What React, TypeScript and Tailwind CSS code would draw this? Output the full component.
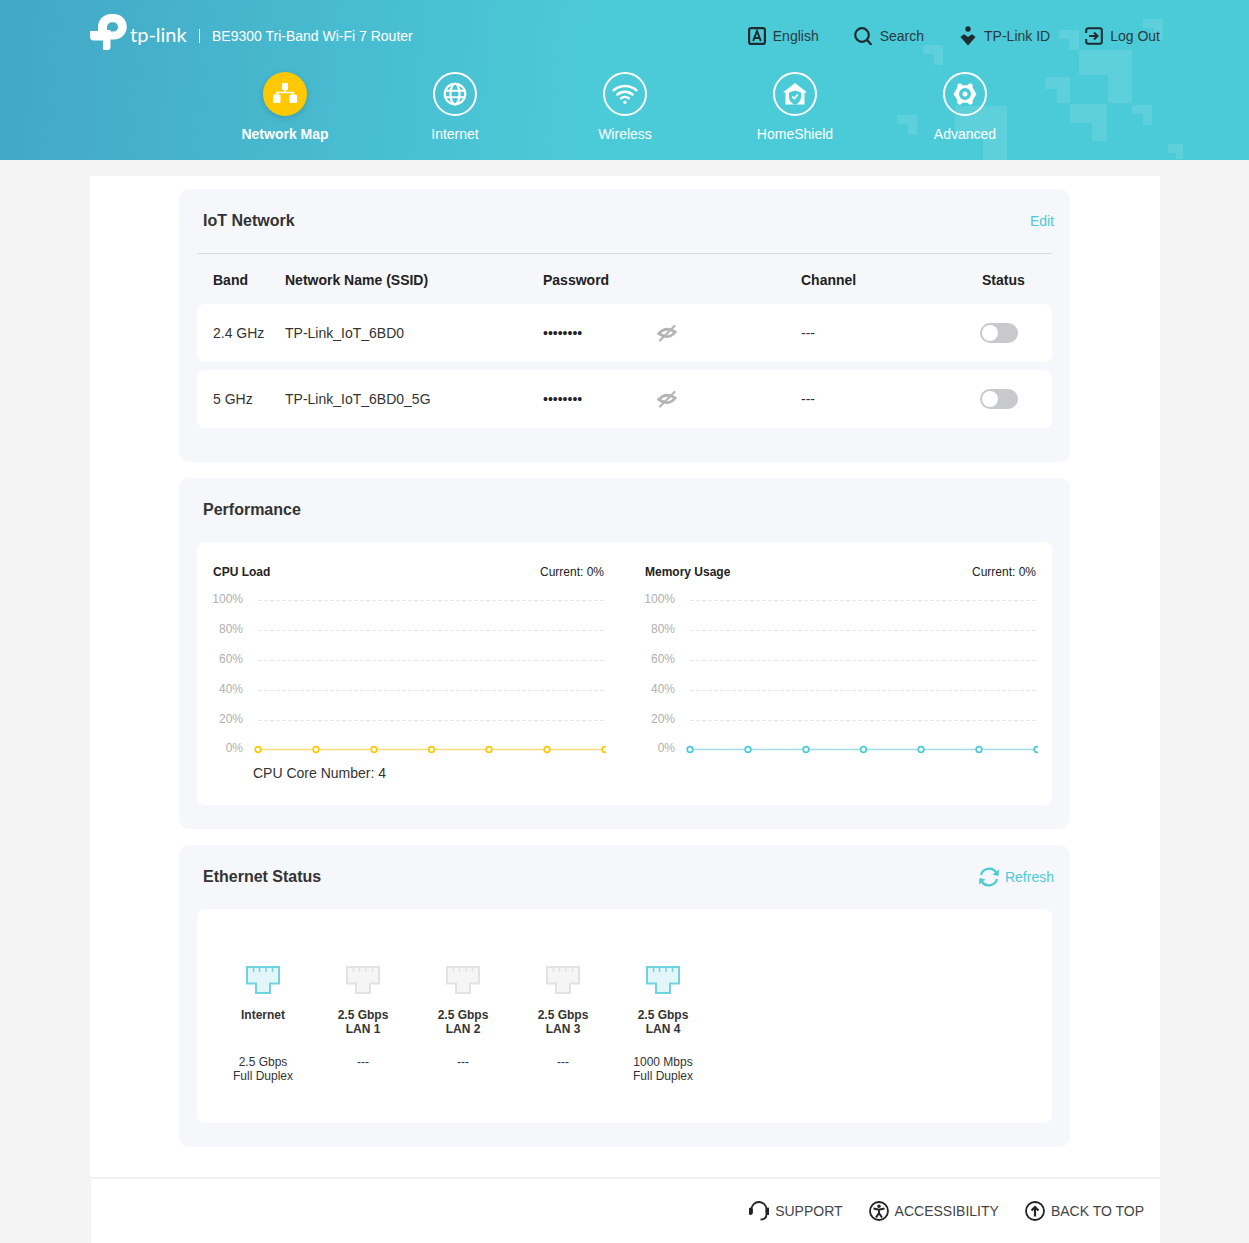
import React from 'react'

const FONT = "font-['Liberation_Sans',Arial,sans-serif]"

// faint stepped shapes in the header background: [left, top, width, height, notchWidth, notchHeight]
const BG_SHAPES = [
    [923, 45, 20, 20, 11, 11],
    [1059, 30, 20, 20, 10, 11],
    [1079, 50, 53, 53, 29, 28],
    [1143, 19, 20, 21, 11, 12],
    [1045, 77, 25, 26, 12, 14],
    [1070, 104, 37, 37, 22, 18],
    [1132, 105, 20, 20, 11, 11],
    [897, 115, 20, 20, 11, 11],
    [955, 106, 52, 54, 28, 21],
    [1168, 144, 15, 15, 8, 6],
]

const NavIcon = ({ name }: { name: string }) => {
    if (name === 'map') {
        return (
            <svg viewBox="0 0 24 24" className="w-6 h-6" fill="#fff">
                <rect x="9" y="1" width="6" height="7" rx="1" />
                <path d="M11.200 7h1.600v2.700h8V14h-1.600v-2.700H4.800V14H3.200V9.700h8z" />
                <rect x="0" y="12.500" width="7.500" height="8.500" rx="1.500" />
                <rect x="16.500" y="12.500" width="7.500" height="8.500" rx="1.500" />
            </svg>
        )
    }
    if (name === 'globe') {
        return (
            <svg viewBox="0 0 24 24" className="w-[26px] h-[26px]" fill="none" stroke="#fff" strokeWidth="2">
                <circle cx="12" cy="12" r="9.500" />
                <ellipse cx="12" cy="12" rx="4.200" ry="9.500" />
                <path d="M2.500 9h19M2.500 15h19" />
            </svg>
        )
    }
    if (name === 'wifi') {
        return (
            <svg viewBox="0 0 24 24" className="w-[26px] h-[26px]" fill="none" stroke="#fff" strokeWidth="2.300" strokeLinecap="round">
                <path d="M1.500 8.500c6-5.300 15-5.300 21 0" />
                <path d="M5 12.500c4-3.500 10-3.500 14 0" />
                <path d="M8.500 16c2-1.600 5-1.600 7 0" />
                <circle cx="12" cy="19.500" r="1.500" fill="#fff" stroke="none" />
            </svg>
        )
    }
    if (name === 'shield') {
        return (
            <svg viewBox="0 0 24 24" className="w-6 h-6">
                <path fill="#fff" d="M12 1 24 10.500h-2.500V22.500h-19V10.500H0z" />
                <path fill="#4bcbd7" d="M12 8.500l6 2v5c0 3-2.500 5.500-5 7h-2c-2.500-1.500-5-4-5-7v-5z" />
                <path fill="none" stroke="#fff" strokeWidth="1.700" d="m9.200 14.500 2 2 3.600-3.800" />
            </svg>
        )
    }
    return (
        <svg viewBox="0 0 24 24" className="w-6 h-6">
            <path fill="#fff" fillRule="evenodd" d="M5.500 1.500h2.200l1.800 1.700h5l1.800-1.700h2.200l1.200 1.500v2.700L23.500 12l-3.800 6.300V21l-1.200 1.500h-2.200l-1.800-1.700h-5l-1.800 1.700H5.500L4.300 21v-2.700L.5 12l3.800-6.300V3zM12 6a6 6 0 1 0 0 12 6 6 0 0 0 0-12z" />
            <circle cx="12" cy="12" r="2.500" fill="#fff" />
        </svg>
    )
}

const NAV = [
    { label: 'Network Map', icon: 'map', active: true },
    { label: 'Internet', icon: 'globe' },
    { label: 'Wireless', icon: 'wifi' },
    { label: 'HomeShield', icon: 'shield' },
    { label: 'Advanced', icon: 'gear' },
]

const Header = () => (
    <header className="relative h-40 overflow-hidden bg-[linear-gradient(95deg,#43a7c6,#4bcbd7_48%)]">
        {BG_SHAPES.map(([l, t, w, h, nw, nh], i) => (
            <div
                key={i}
                className="absolute bg-white/10"
                style={{
                    left: l,
                    top: t,
                    width: w,
                    height: h,
                    clipPath: `polygon(0 0, 100% 0, 100% 100%, ${nw}px 100%, ${nw}px ${h - nh}px, 0 ${h - nh}px)`,
                }}
            />
        ))}
        <div className="relative flex items-center h-[72px] pl-[90px] pr-[89px]">
            <svg viewBox="0 0 37 37" className="w-[37px] h-[37px] shrink-0 -mt-[7px]" fill="#fff">
                <path d="M0 17h13v9.500H3.500C1.500 26.500 0 25 0 23z" />
                <path d="M13 16h7.500v17.500c0 1.500-1.300 2.500-2.500 2.500h-5z" />
                <path d="M8 17v-4A13 13 0 0 1 21 0h3a12.700 12.700 0 0 1 0 25.500h-4V17.500h3.500a4.600 4.600 0 0 0 0-9.200H22a5 5 0 0 0-5 5V17z" />
            </svg>
            <span className="w-[72px] pl-[3px] text-xl leading-none text-white font-['Lato',sans-serif] -mt-[4px]">tp-link</span>
            <span className="w-px h-[14px] bg-white" />
            <span className="text-sm text-white ml-3">BE9300 Tri-Band Wi-Fi 7 Router</span>
            <div className="ml-auto flex items-center text-sm text-[#2a3a40]">
                <svg viewBox="0 0 18 18" className="w-[18px] h-[18px]" fill="none" stroke="#1f2a2e" strokeWidth="2.200">
                    <rect x="1.100" y="1.100" width="15.800" height="15.800" rx="2" />
                    <path strokeWidth="2" d="m5.200 14 3.800-10 3.800 10M6.500 11h5" />
                </svg>
                <span className="ml-[7px]">English</span>
                <svg viewBox="0 0 18 18" className="w-[18px] h-[18px] ml-[35px]" fill="none" stroke="#1f2a2e" strokeWidth="2.200">
                    <circle cx="8" cy="8" r="6.800" />
                    <path d="m13 13 4 4.500" strokeLinecap="round" />
                </svg>
                <span className="ml-[8px]">Search</span>
                <svg viewBox="0 0 16 20" className="w-4 h-5 ml-[36px]" fill="#1f2a2e">
                    <circle cx="8" cy="3" r="2.700" />
                    <path d="M0.500 11 4 8.200l4 2.800 4-2.800 3.500 2.800L8 19.500z" />
                </svg>
                <span className="ml-[8px]">TP-Link ID</span>
                <svg viewBox="0 0 18 18" className="w-[18px] h-[18px] ml-[35px]" fill="none" stroke="#1f2a2e" strokeWidth="2">
                    <path d="M1.200 6V3.200a2 2 0 0 1 2-2h11.600a2 2 0 0 1 2 2v11.600a2 2 0 0 1-2 2H3.200a2 2 0 0 1-2-2V12" />
                    <path d="M4 9h8.500M9 5.500 12.500 9 9 12.500" />
                </svg>
                <span className="ml-[7px]">Log Out</span>
            </div>
        </div>
        <nav className="relative flex pl-[200px]">
            {NAV.map((n) => (
                <div key={n.label} className="w-[170px] flex flex-col items-center">
                    {n.active ? (
                        <div className="w-11 h-11 rounded-full bg-[#ffc800] shadow-[0_2px_6px_rgba(0,0,0,0.15)] flex items-center justify-center">
                            <NavIcon name={n.icon} />
                        </div>
                    ) : (
                        <div className="w-11 h-11 rounded-full border-2 border-white flex items-center justify-center">
                            <NavIcon name={n.icon} />
                        </div>
                    )}
                    <span className={`mt-[10px] text-sm leading-4 text-white ${n.active ? 'font-bold' : ''}`}>{n.label}</span>
                </div>
            ))}
        </nav>
    </header>
)

const EyeOff = () => (
    <svg viewBox="0 0 20 20" className="w-5 h-5" fill="none" stroke="#b4b4b4">
        <path strokeWidth="2.800" d="M1.800 10.500C6 6 12 5 18.200 9 14 14.500 8 15 1.800 10.500z" />
        <path strokeWidth="2.200" strokeLinecap="round" d="M3 17.500 17.500 3" />
    </svg>
)

const Toggle = () => (
    <div className="w-[38px] h-5 rounded-full bg-[#c8c9cc] p-[2px]">
        <div className="w-4 h-4 rounded-full bg-white" />
    </div>
)

const Card = ({ title, right, children, className }: { title: string; right?: React.ReactNode; children: React.ReactNode; className?: string }) => (
    <section className={`bg-[#f5f7fb] rounded-[10px] px-[18px] ${className ?? ''}`}>
        <div className="flex items-center justify-between h-16 pl-[6px] -mr-[2px]">
            <h2 className="text-base font-bold text-[#333]">{title}</h2>
            {right}
        </div>
        {children}
    </section>
)

const ROWS = [
    { band: '2.4 GHz', ssid: 'TP-Link_IoT_6BD0' },
    { band: '5 GHz', ssid: 'TP-Link_IoT_6BD0_5G' },
]

const IotCard = () => (
    <Card title="IoT Network" right={<span className="text-sm text-[#4acbd6]">Edit</span>} className="pb-[34px]">
        <div className="border-t border-[#d9dae0]">
            <div className="flex items-center h-[50px] pt-[2px] text-sm font-bold text-[#222]">
                <span className="w-[88px] pl-4">Band</span>
                <span className="w-[258px]">Network Name (SSID)</span>
                <span className="w-[258px]">Password</span>
                <span className="w-[181px]">Channel</span>
                <span>Status</span>
            </div>
            <div className="flex flex-col gap-2">
                {ROWS.map((r) => (
                    <div key={r.band} className="flex items-center h-[58px] bg-white rounded-lg text-sm text-[#333]">
                        <span className="w-[88px] pl-4">{r.band}</span>
                        <span className="w-[258px]">{r.ssid}</span>
                        <span className="w-[114px] text-[#222]">••••••••</span>
                        <span className="w-[144px]"><EyeOff /></span>
                        <span className="w-[179px]">---</span>
                        <Toggle />
                    </div>
                ))}
            </div>
        </div>
    </Card>
)

const TICKS = ['100%', '80%', '60%', '40%', '20%']

const Chart = ({ title, color, line }: { title: string; color: string; line: string }) => (
    <div className="w-[393px]">
        <div className="flex justify-between text-xs text-[#222] h-4 items-center">
            <span className="font-bold">{title}</span>
            <span className="mr-[2px]">Current: 0%</span>
        </div>
        <svg width="393" height="172" className="block mt-3">
            {TICKS.map((t, i) => (
                <g key={t}>
                    <text x="30" y={11 + i * 30} textAnchor="end" fontSize="12" fill="#b0b0b0">{t}</text>
                    <line x1="45" x2="393" y1={8.500 + i * 30} y2={8.500 + i * 30} stroke="#e6e6e6" strokeDasharray="4 2" />
                </g>
            ))}
            <text x="30" y="160" textAnchor="end" fontSize="12" fill="#b0b0b0">0%</text>
            <line x1="45" x2="393" y1="157.500" y2="157.500" stroke={line} strokeWidth="1.500" />
            {[45, 103, 161, 218.500, 276, 334, 392].map((x) => (
                <circle key={x} cx={x} cy="157.500" r="2.800" fill="#fff" stroke={color} strokeWidth="1.700" />
            ))}
        </svg>
    </div>
)

const PerformanceCard = () => (
    <Card title="Performance" className="pb-6">
        <div className="bg-white rounded-lg h-[263px] pt-[22px] px-4">
            <div className="flex gap-[39px]">
                <Chart title="CPU Load" color="#ffc800" line="#f8dc7c" />
                <Chart title="Memory Usage" color="#4acbd6" line="#9fdde4" />
            </div>
            <p className="text-sm text-[#333] pl-10 -mt-[1px]">CPU Core Number: 4</p>
        </div>
    </Card>
)

const Port = ({ on }: { on: boolean }) => {
    const stroke = on ? '#6fd3df' : '#e2e2e2'
    const fill = on ? '#e2f6f9' : '#f5f5f5'
    return (
        <svg viewBox="0 0 34 28" className="w-[34px] h-7" fill={fill} stroke={stroke} strokeWidth="2">
            <path d="M1 1h32v16.500h-9V27H10v-9.500H1z" />
            <path fill="none" strokeWidth="1.500" d="M7.500 1v5M13.500 1v5M20 1v5M26.500 1v5" />
        </svg>
    )
}

const PORTS = [
    { name: ['Internet'], info: ['2.5 Gbps', 'Full Duplex'], on: true },
    { name: ['2.5 Gbps', 'LAN 1'], info: ['---'], on: false },
    { name: ['2.5 Gbps', 'LAN 2'], info: ['---'], on: false },
    { name: ['2.5 Gbps', 'LAN 3'], info: ['---'], on: false },
    { name: ['2.5 Gbps', 'LAN 4'], info: ['1000 Mbps', 'Full Duplex'], on: true },
]

const EthernetCard = () => (
    <Card
        title="Ethernet Status"
        className="pb-6"
        right={
            <span className="flex items-center gap-[5px] text-sm text-[#4acbd6]">
                <svg viewBox="0 0 22 22" className="w-[22px] h-[22px]" fill="none" stroke="#4acbd6" strokeWidth="2.200">
                    <path d="M3 9a8.500 8.500 0 0 1 15-3l1.500 2" />
                    <path d="M19 13a8.500 8.500 0 0 1-15 3l-1.500-2" />
                    <path fill="#4acbd6" stroke="none" d="m21 3.500-.5 6.500-6-1.500zM1 18.500l.5-6.500 6 1.500z" />
                </svg>
                Refresh
            </span>
        }
    >
        <div className="bg-white rounded-lg h-[214px] pt-[57px] pl-4 flex">
            {PORTS.map((p, i) => (
                <div key={i} className="w-[100px] flex flex-col items-center text-xs leading-[14px] text-center text-[#333]">
                    <Port on={p.on} />
                    <div className="mt-[14px] h-[47px] font-bold">
                        {p.name.map((l) => <div key={l}>{l}</div>)}
                    </div>
                    <div>
                        {p.info.map((l) => <div key={l}>{l}</div>)}
                    </div>
                </div>
            ))}
        </div>
    </Card>
)

const Footer = () => (
    <footer className="mt-[30px] border-t-2 border-l border-[#f2f2f2] h-[66px] flex items-center justify-end pr-4 text-sm text-[#444]">
        <svg viewBox="0 0 20 20" className="w-5 h-5" fill="none" stroke="#222" strokeWidth="1.800">
            <path d="M2.500 10V8.500a7.500 7.500 0 0 1 15 0V13c0 3.500-2.500 5.500-6 5.500" />
            <rect x="0.500" y="7.500" width="2.500" height="5.500" rx="1.200" fill="#222" />
            <rect x="17.500" y="7.500" width="2.500" height="5.500" rx="1.200" fill="#222" />
        </svg>
        <span className="ml-[6px]">SUPPORT</span>
        <svg viewBox="0 0 20 20" className="w-5 h-5 ml-[26px]" fill="none" stroke="#222" strokeWidth="1.800">
            <circle cx="10" cy="10" r="9" />
            <circle cx="10" cy="5.200" r="1.700" fill="#222" stroke="none" />
            <path strokeWidth="2" d="M4.500 7.500 10 8.700l5.500-1.200M10 8.500V12m0 0-3 4.500m3-4.500 3 4.500" />
        </svg>
        <span className="ml-[6px]">ACCESSIBILITY</span>
        <svg viewBox="0 0 20 20" className="w-5 h-5 ml-[26px]" fill="none" stroke="#222" strokeWidth="1.800">
            <circle cx="10" cy="10" r="9" />
            <path strokeWidth="2.200" d="M10 15.500V6M6.500 9.500 10 6l3.500 3.500" />
        </svg>
        <span className="ml-[6px]">BACK TO TOP</span>
    </footer>
)

export default function App() {
    return (
        <div className={`${FONT} min-h-[1243px] bg-[#f4f4f4]`}>
            <Header />
            <main className="mt-4 ml-[90px] mr-[89px] min-h-[1067px] bg-white pt-[13px] overflow-hidden">
                <div className="flex flex-col gap-4 ml-[89px] mr-[90px]">
                    <IotCard />
                    <PerformanceCard />
                    <EthernetCard />
                </div>
                <Footer />
            </main>
        </div>
    )
}
